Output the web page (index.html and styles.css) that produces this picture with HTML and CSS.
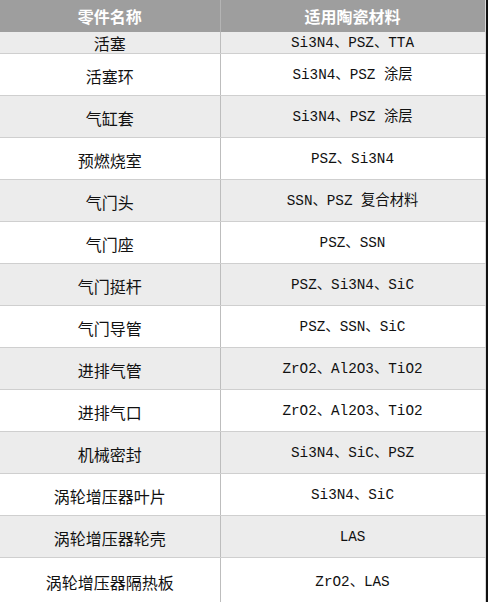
FILE: index.html
```html
<!DOCTYPE html>
<html lang="zh">
<head>
<meta charset="utf-8">
<link rel="stylesheet" href="styles.css">
</head>
<body>
<div class="page">
<table class="parts">
  <colgroup><col class="c1"><col class="c2"></colgroup>
  <thead>
    <tr><th>零件名称</th><th>适用陶瓷材料</th></tr>
  </thead>
  <tbody>
    <tr class="first alt"><td>活塞</td><td class="mat">Si3N4、PSZ、TTA</td></tr>
    <tr><td>活塞环</td><td class="mat">Si3N4、PSZ 涂层</td></tr>
    <tr class="alt"><td>气缸套</td><td class="mat">Si3N4、PSZ 涂层</td></tr>
    <tr><td>预燃烧室</td><td class="mat">PSZ、Si3N4</td></tr>
    <tr class="alt"><td>气门头</td><td class="mat">SSN、PSZ 复合材料</td></tr>
    <tr><td>气门座</td><td class="mat">PSZ、SSN</td></tr>
    <tr class="alt"><td>气门挺杆</td><td class="mat">PSZ、Si3N4、SiC</td></tr>
    <tr><td>气门导管</td><td class="mat">PSZ、SSN、SiC</td></tr>
    <tr class="alt"><td>进排气管</td><td class="mat">ZrO2、Al2O3、TiO2</td></tr>
    <tr><td>进排气口</td><td class="mat">ZrO2、Al2O3、TiO2</td></tr>
    <tr class="alt"><td>机械密封</td><td class="mat">Si3N4、SiC、PSZ</td></tr>
    <tr><td>涡轮增压器叶片</td><td class="mat">Si3N4、SiC</td></tr>
    <tr class="alt"><td>涡轮增压器轮壳</td><td class="mat">LAS</td></tr>
    <tr class="last"><td>涡轮增压器隔热板</td><td class="mat">ZrO2、LAS</td></tr>
  </tbody>
</table>
</div>
</body>
</html>
```

FILE: styles.css
```css
html, body {
  margin: 0;
  padding: 0;
  background: #ffffff;
}

.page {
  width: 486px;
  height: 602px;
  overflow: hidden;
  border-right: 2px solid #111111;
  background: #ffffff;
}

.parts {
  width: 485px;
  border-collapse: collapse;
  table-layout: fixed;
  font-family: "Noto Sans CJK SC", "Noto Sans", sans-serif;
  font-size: 16px;
  color: #111111;
  border-right: 1px solid #d8d8d8;
}

.c1 { width: 220px; }
.c2 { width: 265px; }

.parts th {
  height: 32px;
  padding: 0;
  background: #9e9e9e;
  color: #ffffff;
  font-weight: 700;
  font-size: 16px;
  text-align: center;
  vertical-align: middle;
  border-left: 1px solid #b4b4b4;
}

.parts th:first-child { border-left: none; }

.parts td {
  height: 39px;
  padding: 2px 0 0 0;
  text-align: center;
  vertical-align: middle;
  border-bottom: 1px solid #cfcfcf;
  line-height: 1;
}

.parts td + td {
  border-left: 1px solid #bdbdbd;
}

.parts tr.first td {
  height: 20px;
  padding-top: 1px;
}

.parts tr.last td {
  height: 44px;
  border-bottom: none;
}

.parts tr.alt td {
  background: #ececec;
}

.mat {
  font-family: "Liberation Mono", "Noto Sans CJK SC", monospace;
  font-size: 14.3px;
}
```
